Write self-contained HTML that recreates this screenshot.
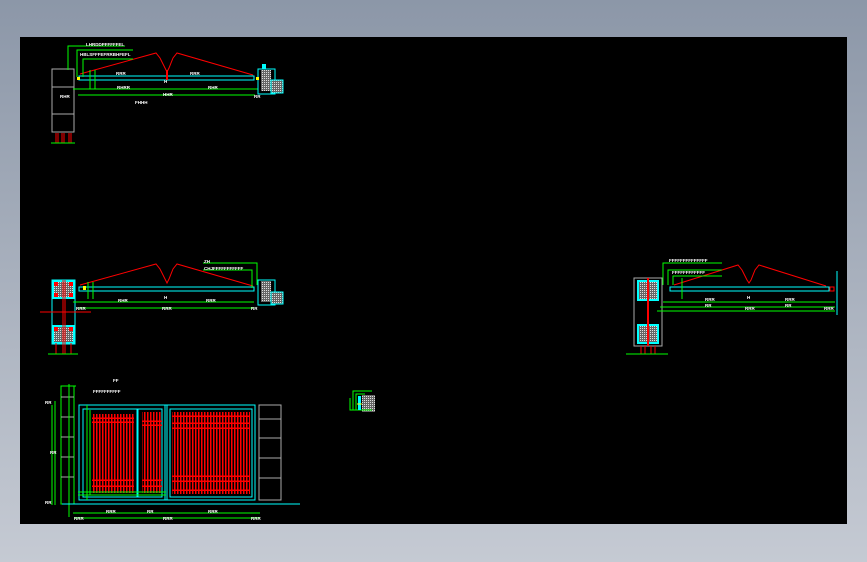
<!DOCTYPE html>
<html><head><style>
html,body{margin:0;padding:0;width:867px;height:562px;overflow:hidden;background:linear-gradient(#8c97a8,#c5cad3);font-family:"Liberation Sans",sans-serif}
svg{position:absolute;left:0;top:0}
</style></head><body>
<svg width="867" height="562" viewBox="0 0 867 562" font-family="Liberation Sans, sans-serif" font-size="4.5" font-weight="bold" fill="none" shape-rendering="crispEdges">
<defs>
<pattern id="hatch" width="2" height="2" patternUnits="userSpaceOnUse"><rect width="2" height="2" fill="#666"/><rect width="1" height="1" fill="#ddd"/></pattern>
<pattern id="bars" width="3" height="10" patternUnits="userSpaceOnUse"><rect x="0" width="1.6" height="10" fill="#f00"/></pattern>
</defs>
<rect x="20" y="37" width="827" height="487" fill="#000"/>

<g stroke-width="1">
<rect x="52" y="69" width="22" height="63" stroke="#aaa"/>
<line x1="52" y1="87" x2="74" y2="87" stroke="#aaa"/><line x1="52" y1="114" x2="74" y2="114" stroke="#aaa"/>
<path d="M56 133V143M58 133V143M62 133V143M64 133V143M69 133V143M71 133V143" stroke="#f00"/>
<line x1="51" y1="143" x2="75" y2="143" stroke="#0f0"/>
<rect x="79" y="76" width="175" height="4" stroke="#0ff"/>
<path d="M80 74L156 53L160 58L165 68L167 72L169 68L173 58L177 53L253 75" stroke="#f00" shape-rendering="auto"/>
<line x1="167" y1="70" x2="167" y2="80" stroke="#f00" stroke-width="2"/>
<path d="M73 89H260M78 95H255M68 70V46H125M77 77V50H133M83 77V59H133M90 70V89M95 70V89" stroke="#0f0"/>
<rect x="258" y="69" width="17" height="25" stroke="#0ff" fill="#000"/>
<rect x="261" y="70" width="10" height="21" fill="url(#hatch)"/>
<rect x="271" y="80" width="12" height="13" fill="url(#hatch)" stroke="#0ff"/>
<rect x="262" y="64" width="4" height="5" fill="#0ff"/>
<rect x="256" y="77" width="3" height="3" fill="#ff0"/><rect x="77" y="77" width="3" height="3" fill="#ff0"/>
</g>
<g fill="#fff">
<text x="86" y="46">LHRDDPFFFFFEL</text><text x="80" y="56">HBLSFFFEFRRBHFEFL</text>
<text x="116" y="75">RRR</text><text x="190" y="75">RRR</text>
<text x="117" y="89">RHRR</text><text x="208" y="89">RHR</text>
<text x="60" y="98">RHR</text><text x="163" y="96">HHR</text><text x="254" y="98">RR</text>
<text x="135" y="104">FHHH</text><text x="164" y="83">H</text>
</g>

<g stroke-width="1">
<rect x="52" y="280" width="23" height="64" stroke="#0ff"/>
<rect x="53" y="281" width="21" height="17" fill="url(#hatch)" stroke="#0ff" stroke-width="2"/>
<rect x="53" y="326" width="21" height="17" fill="url(#hatch)" stroke="#0ff" stroke-width="2"/>
<path d="M63 280V354M65 280V354M56 343V354M71 343V354" stroke="#f00"/>
<rect x="54" y="282" width="4" height="4" fill="#f00"/><rect x="69" y="282" width="4" height="4" fill="#f00"/>
<rect x="54" y="293" width="4" height="4" fill="#f00"/><rect x="69" y="293" width="4" height="4" fill="#f00"/>
<rect x="54" y="327" width="4" height="4" fill="#f00"/><rect x="69" y="327" width="4" height="4" fill="#f00"/>
<line x1="40" y1="312" x2="91" y2="312" stroke="#f00"/>
<line x1="48" y1="354" x2="78" y2="354" stroke="#0f0"/>
<rect x="79" y="287" width="175" height="4" stroke="#0ff"/>
<path d="M80 285L156 264L160 269L165 279L167 283L169 279L173 269L177 264L253 286" stroke="#f00" shape-rendering="auto"/>
<path d="M73 302H254M78 308H254M88 282V299M93 282V299M203 263H257V285M203 270H252V288" stroke="#0f0"/>
<rect x="258" y="280" width="17" height="25" stroke="#0ff" fill="#000"/>
<rect x="261" y="281" width="10" height="21" fill="url(#hatch)"/>
<rect x="271" y="292" width="12" height="12" fill="url(#hatch)" stroke="#0ff"/>
<rect x="83" y="286" width="3" height="4" fill="#ff0"/>
</g>
<g fill="#fff">
<text x="204" y="263">ZH</text><text x="204" y="270">CHJFFFFFFFFFFF</text>
<text x="118" y="302">RHR</text><text x="206" y="302">RRR</text><text x="164" y="299">H</text>
<text x="76" y="310">RRR</text><text x="162" y="310">RRR</text><text x="251" y="310">RR</text>
</g>

<g stroke-width="1">
<rect x="634" y="278" width="28" height="68" stroke="#aaa"/>
<rect x="638" y="281" width="20" height="19" fill="url(#hatch)" stroke="#0ff" stroke-width="2"/>
<rect x="638" y="325" width="20" height="18" fill="url(#hatch)" stroke="#0ff" stroke-width="2"/>
<line x1="648" y1="278" x2="648" y2="346" stroke="#f00" stroke-width="2"/>
<path d="M641 346V354M645 346V354M651 346V354M655 346V354" stroke="#f00"/>
<line x1="626" y1="354" x2="668" y2="354" stroke="#0f0"/>
<rect x="670" y="287" width="159" height="4" stroke="#0ff"/>
<path d="M674 285L738 265L742 270L747 280L749 283L751 280L755 270L759 265L826 286" stroke="#f00" shape-rendering="auto"/>
<path d="M663 302H835M660 307H835M657 311H835M663 285V263H722M668 285V270H722M673 285V276H722M682 278V299" stroke="#0f0"/>
<line x1="837" y1="271" x2="837" y2="315" stroke="#0ff"/>
<rect x="830" y="287" width="4" height="4" stroke="#f00"/>
</g>
<g fill="#fff">
<text x="669" y="262">FFFFFFFFFFFFFF</text><text x="672" y="274">FFFFFFFFFFFF</text>
<text x="705" y="301">RRR</text><text x="747" y="299">H</text><text x="785" y="301">RRR</text>
<text x="705" y="307">RR</text><text x="745" y="310">RRR</text><text x="785" y="307">RR</text>
<text x="824" y="310">RRR</text>
</g>

<g stroke-width="1">
<rect x="362" y="395" width="13" height="17" fill="url(#hatch)"/>
<path d="M353 410V391H372M356 410V394H365M350 398V410H372" stroke="#0f0"/>
<rect x="358" y="396" width="3" height="14" fill="#0ff"/>
<path d="M357 404H362" stroke="#ff0"/>
</g>

<g stroke-width="1">
<rect x="61" y="386" width="13" height="118" stroke="#0f0"/>
<path d="M61 397H74M61 417H74M61 437H74M61 457H74M61 477H74" stroke="#aaa"/>
<path d="M55 401V505M52 405V505M69 384V517M62 386H76" stroke="#0f0"/>
<rect x="79" y="405" width="176" height="95" stroke="#0ff"/>
<rect x="83" y="409" width="54" height="88" stroke="#0ff"/>
<rect x="138" y="409" width="24" height="88" stroke="#0ff"/>
<rect x="170" y="409" width="82" height="88" stroke="#0ff"/>
<rect x="92" y="414" width="42" height="79" fill="url(#bars)"/>
<rect x="142" y="412" width="20" height="81" fill="url(#bars)"/>
<rect x="172" y="412" width="78" height="82" fill="url(#bars)"/>
<path d="M92 418H134M92 422H134M92 480H134M92 486H134M142 421H162M142 425H162M142 480H162M142 486H162M172 416H250M172 423H250M172 428H250M172 476H250M172 481H250M172 490H250" stroke="#f00" stroke-width="1.5"/>
<path d="M165 405V500M167 405V500" stroke="#0ff"/>
<path d="M87 405V500M90 410V495M78 492H166M78 495H166" stroke="#0f0"/>
<rect x="259" y="405" width="22" height="95" stroke="#aaa"/>
<path d="M259 419H281M259 438H281M259 458H281M259 478H281" stroke="#aaa"/>
<line x1="62" y1="504" x2="300" y2="504" stroke="#0ff"/>
<path d="M73 513H260M74 518H260" stroke="#0f0"/>
</g>
<g fill="#fff">
<text x="93" y="393">FFFFFFFFFF</text><text x="113" y="382">FF</text>
<text x="106" y="513">RRR</text><text x="147" y="513">RR</text><text x="208" y="513">RRR</text>
<text x="74" y="520">RRR</text><text x="163" y="520">RRR</text><text x="251" y="520">RRR</text>
<text x="45" y="404">RR</text><text x="50" y="454">RR</text><text x="45" y="504">RR</text>
</g>
</svg>
</body></html>
